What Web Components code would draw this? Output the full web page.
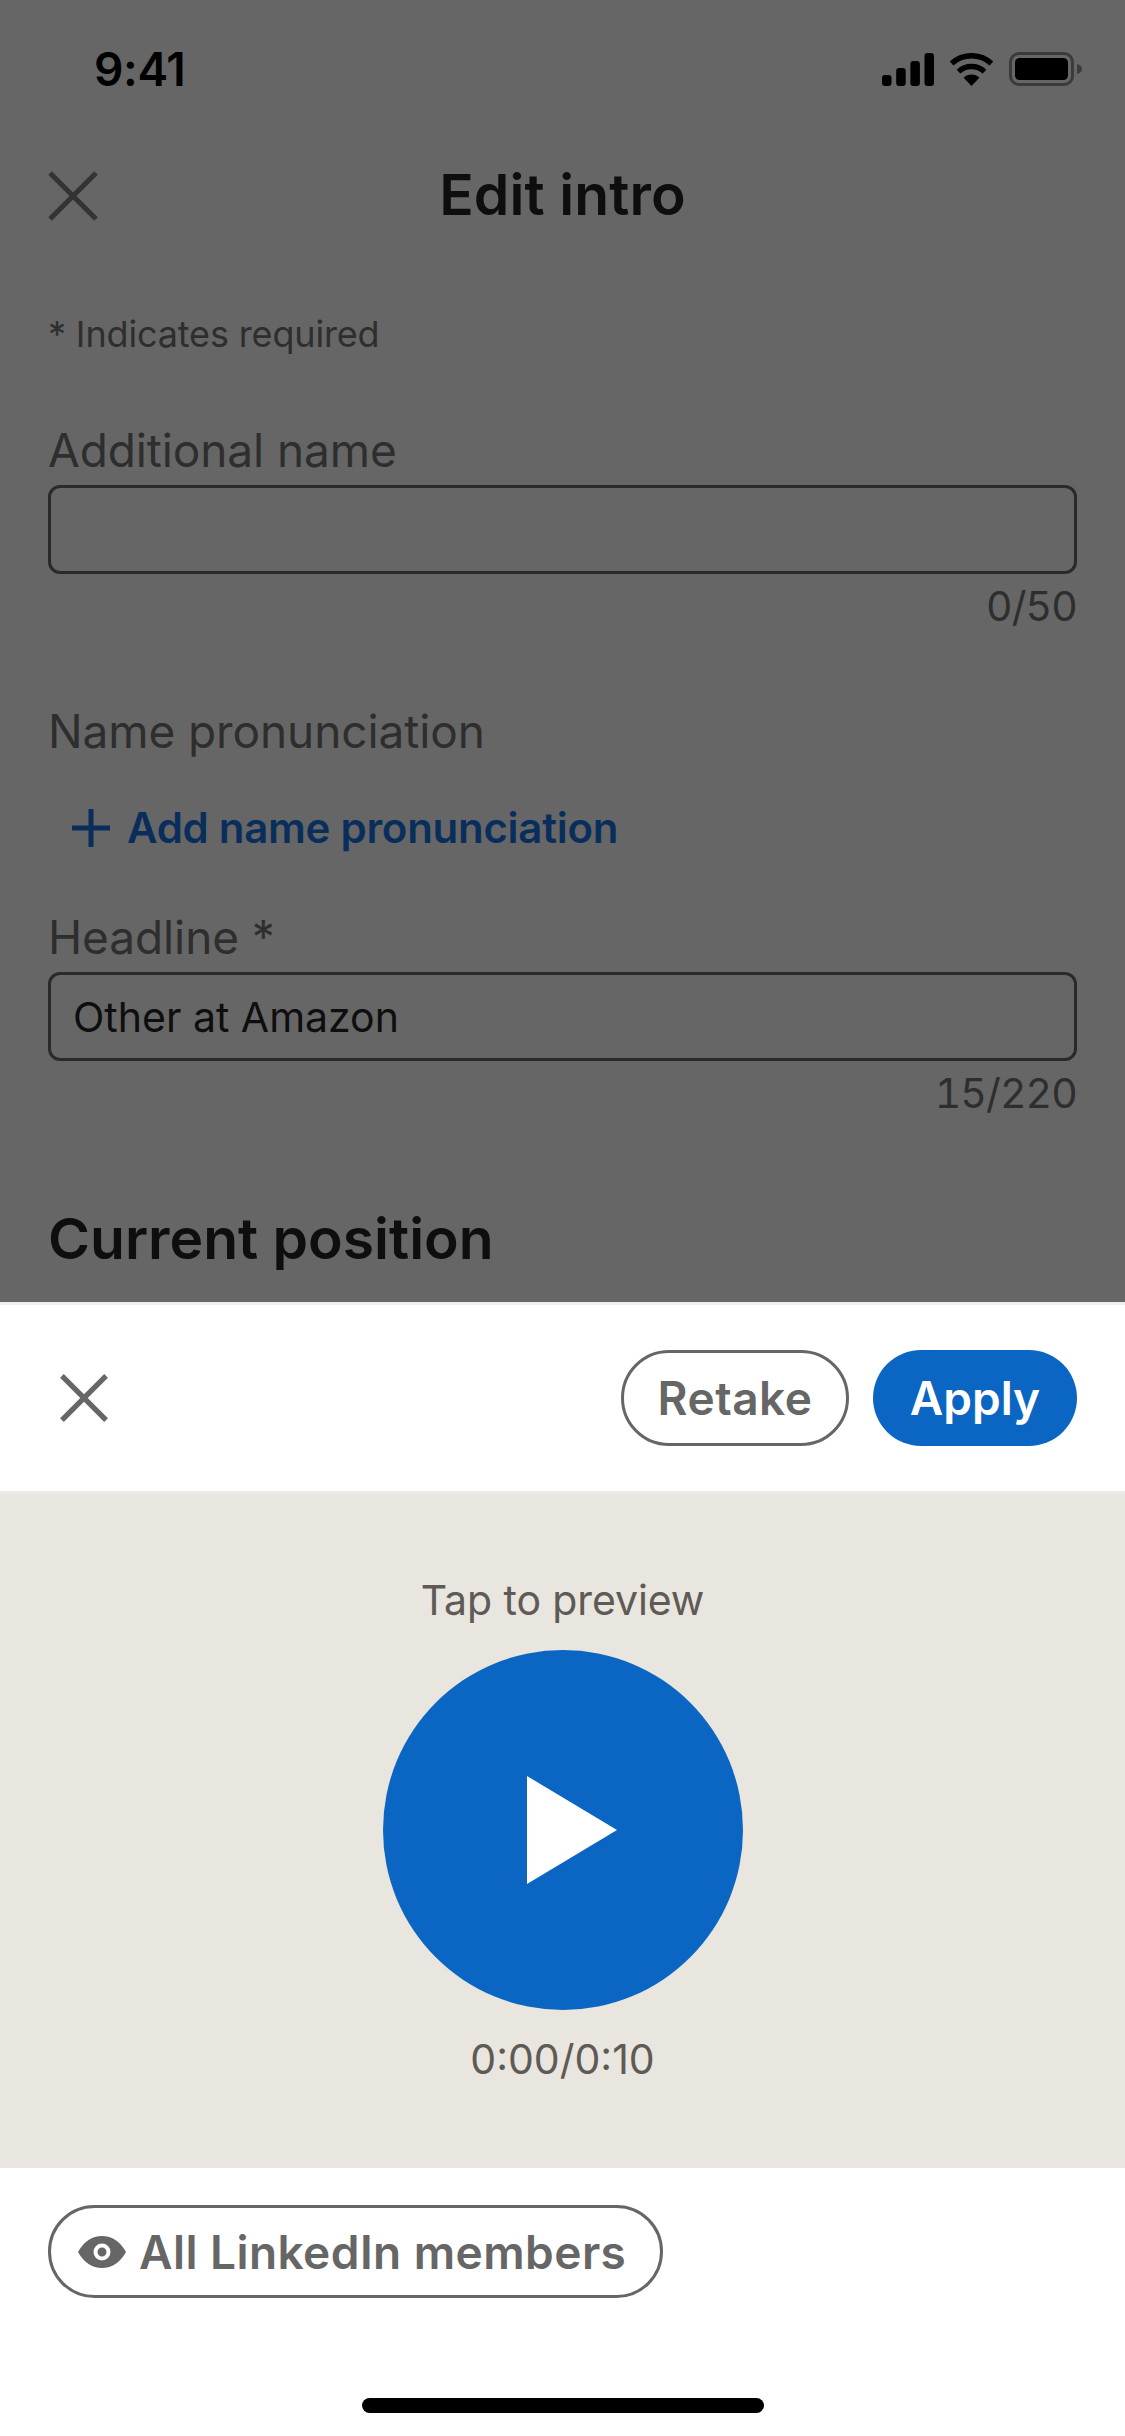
<!DOCTYPE html>
<html lang="en">
<head>
<meta charset="utf-8">
<title>Edit intro</title>
<style>
  html, body { margin: 0; padding: 0; background: #fff; }
  body { font-family: Inter, "Liberation Sans", sans-serif; }
</style>
</head>
<body>
<edit-screen>
  <dimmed-page slot="page">
    <status-bar></status-bar>
    <nav-header>Edit intro</nav-header>
    <p-note>* Indicates required</p-note>
    <form-field style="--field-top: 66px" label="Additional name" count="0/50"></form-field>
    <pronunciation-field label="Name pronunciation">Add name pronunciation</pronunciation-field>
    <form-field style="--field-top: 54px" label="Headline *" value="Other at Amazon" count="15/220"></form-field>
    <section-title>Current position</section-title>
  </dimmed-page>
  <sheet-toolbar slot="sheet"></sheet-toolbar>
  <preview-panel slot="sheet" hint="Tap to preview" time="0:00/0:10"></preview-panel>
  <audience-chip slot="sheet">All LinkedIn members</audience-chip>
  <home-indicator slot="sheet"></home-indicator>
</edit-screen>
<script>
function define(name, html, init) {
  const t = document.createElement('template');
  t.innerHTML = html;
  customElements.define(name, class extends HTMLElement {
    connectedCallback() {
      if (this.shadowRoot) return;
      const root = this.attachShadow({ mode: 'open' });
      root.appendChild(t.content.cloneNode(true));
      if (init) init(root, this);
    }
  });
}

define('edit-screen', `
<style>
  :host { display: flex; flex-direction: column; width: 1125px; height: 2436px; overflow: hidden; background: #fff; }
  .page { flex: none; height: 1302px; overflow: hidden; background: #666; }
  .sheet { flex: 1; display: flex; flex-direction: column; background: #fff; border-top: 3px solid #efefef; }
</style>
<div class="page"><slot name="page"></slot></div>
<div class="sheet"><slot name="sheet"></slot></div>`);

define('dimmed-page', `
<style>:host { display: block; padding: 0 48px; }</style>
<slot></slot>`);

define('status-bar', `
<style>
  :host { display: flex; align-items: center; justify-content: space-between; height: 138px; margin: 0 -5px 0 46px; color: #000; }
  .time { font-size: 46px; font-weight: 600; letter-spacing: -0.3px; }
  .icons { display: flex; align-items: center; gap: 15px; }
  svg { display: block; }
</style>
<span class="time">9:41</span>
<div class="icons">
  <svg width="52" height="33" viewBox="0 0 52 33" fill="#000">
    <rect x="0" y="22" width="9.500" height="11" rx="3"/>
    <rect x="14.200" y="15" width="9.500" height="18" rx="3"/>
    <rect x="28.400" y="8" width="9.500" height="25" rx="3"/>
    <rect x="42.500" y="0" width="9.500" height="33" rx="3"/>
  </svg>
  <svg width="45" height="33" viewBox="0 0 45 33" fill="none">
    <path d="M22.500 33 14.600 24.800a11.400 11.400 0 0 1 15.800 0Z" fill="#000"/>
    <path d="M9.500 18.600a19 19 0 0 1 26 0" stroke="#000" stroke-width="5.400"/>
    <path d="M2.600 10.400a29.500 29.500 0 0 1 39.800 0" stroke="#000" stroke-width="5.400"/>
  </svg>
  <svg width="73" height="34" viewBox="0 0 73 34" fill="none">
    <rect x="1.500" y="1.500" width="62" height="31" rx="8.500" stroke="#3b3b3b" stroke-width="3"/>
    <rect x="6" y="6" width="53" height="22" rx="4.500" fill="#000"/>
    <path d="M68 12c3 .8 5 2.600 5 5s-2 4.200-5 5Z" fill="#3b3b3b"/>
  </svg>
</div>`);

define('nav-header', `
<style>
  :host { display: flex; align-items: center; height: 116px; }
  .close { flex: none; height: 50px; }
  .title { flex: 1; text-align: center; padding: 0 50px 3px 0; font-size: 57px; font-weight: 600; color: #0e0e0e; letter-spacing: 0.1px; }
  svg { display: block; }
</style>
<div class="close"><svg width="50" height="50" viewBox="0 0 50 50" fill="none"><path d="M2 2 48 48M48 2 2 48" stroke="#333" stroke-width="5"/></svg></div>
<div class="title"><slot></slot></div>`);

define('p-note', `
<style>:host { display: block; margin-top: 58px; font-size: 36px; line-height: 44px; color: #2e2e2e; letter-spacing: -0.15px; }</style>
<slot></slot>`);

define('form-field', `
<style>
  :host { display: block; }
  .label { font-size: 46px; line-height: 56px; color: #2e2e2e; letter-spacing: -0.1px; margin: var(--field-top, 50px) 0 7px; }
  .box { box-sizing: border-box; height: 89px; border: 3px solid #2a2a2a; border-radius: 12px; padding: 0 22px; display: flex; align-items: center; font-size: 41px; color: #0e0e0e; }
  .count { text-align: right; font-size: 41px; font-variant-numeric: tabular-nums; letter-spacing: -0.9px; line-height: 52px; color: #2e2e2e; margin-top: 6px; }
</style>
<div class="label"></div>
<div class="box"></div>
<div class="count"></div>`, (root, el) => {
  root.querySelector('.label').textContent = el.getAttribute('label');
  root.querySelector('.box').textContent = el.getAttribute('value') || '';
  root.querySelector('.count').textContent = el.getAttribute('count');
});

define('pronunciation-field', `
<style>
  :host { display: block; margin-top: 71px; }
  .label { font-size: 46px; line-height: 56px; color: #2e2e2e; letter-spacing: -0.1px; }
  .add { display: flex; align-items: center; gap: 17px; margin-top: 42px; padding-left: 24px; font-size: 42px; line-height: 54px; font-weight: 600; color: #0a2e5c; letter-spacing: -0.28px; }
  svg { display: block; flex: none; }
</style>
<div class="label"></div>
<div class="add">
  <svg width="38" height="38" viewBox="0 0 38 38"><path d="M16.500 0h5v16.500H38v5H21.500V38h-5V21.500H0v-5h16.500Z" fill="#0a2e5c"/></svg>
  <span><slot></slot></span>
</div>`, (root, el) => {
  root.querySelector('.label').textContent = el.getAttribute('label');
});

define('section-title', `
<style>:host { display: block; margin-top: 86px; font-size: 57px; line-height: 68px; font-weight: 600; color: #0e0e0e; letter-spacing: 0; }</style>
<slot></slot>`);

define('sheet-toolbar', `
<style>
  :host { display: flex; align-items: center; height: 186px; box-sizing: border-box; padding: 0 48px 0 60px; }
  .close { margin-right: auto; height: 48px; }
  .btn { box-sizing: border-box; height: 96px; border-radius: 48px; display: flex; align-items: center; justify-content: center; font-size: 46px; font-weight: 600; }
  .retake { width: 228px; border: 3px solid #666; color: #666; margin-right: 24px; letter-spacing: 0.5px; }
  .apply { width: 204px; background: #0a66c2; color: #fff; }
  svg { display: block; }
</style>
<div class="close"><svg width="48" height="48" viewBox="0 0 50 50" fill="none"><path d="M2 2 48 48M48 2 2 48" stroke="#666" stroke-width="5.500"/></svg></div>
<div class="btn retake">Retake</div>
<div class="btn apply">Apply</div>`);

define('preview-panel', `
<style>
  :host { display: flex; flex-direction: column; align-items: center; height: 677px; box-sizing: border-box; padding-top: 81px; background: #e9e5df; border-top: 3px solid #eeeae6; color: #5e5a56; font-size: 41px; }
  .hint { line-height: 50px; letter-spacing: -0.1px; }
  .play { width: 360px; height: 360px; margin-top: 25px; border-radius: 50%; background: #0a66c2; display: flex; align-items: center; justify-content: center; }
  .play svg { display: block; margin-left: 18px; }
  .time { margin-top: 24px; line-height: 50px; }
</style>
<div class="hint"></div>
<div class="play"><svg width="90" height="108" viewBox="0 0 90 108"><path d="M0 0 90 54 0 108Z" fill="#fff"/></svg></div>
<div class="time"></div>`, (root, el) => {
  root.querySelector('.hint').textContent = el.getAttribute('hint');
  root.querySelector('.time').textContent = el.getAttribute('time');
});

define('audience-chip', `
<style>
  :host { display: flex; margin: 37px 0 0 48px; width: 615px; box-sizing: border-box; height: 93px; border: 3px solid #666; border-radius: 47px; align-items: center; padding-left: 27px; gap: 13px; color: #666; font-size: 46px; font-weight: 600; letter-spacing: 0.45px; }
  svg { display: block; flex: none; }
</style>
<svg width="48" height="32" viewBox="0 0 48 32"><path fill-rule="evenodd" d="M0 16C6 5.500 14 0 24 0s18 5.500 24 16c-6 10.500-14 16-24 16S6 26.500 0 16Zm24-8.500a8.500 8.500 0 1 0 0 17 8.500 8.500 0 0 0 0-17Zm0 4a4.500 4.500 0 1 1 0 9 4.500 4.500 0 0 1 0-9Z" fill="#666"/></svg>
<span><slot></slot></span>`);

define('home-indicator', `
<style>
  :host { display: flex; justify-content: center; margin-top: 100px; }
  .bar { width: 402px; height: 15px; border-radius: 8px; background: #000; }
</style>
<div class="bar"></div>`);
</script>
</body>
</html>
